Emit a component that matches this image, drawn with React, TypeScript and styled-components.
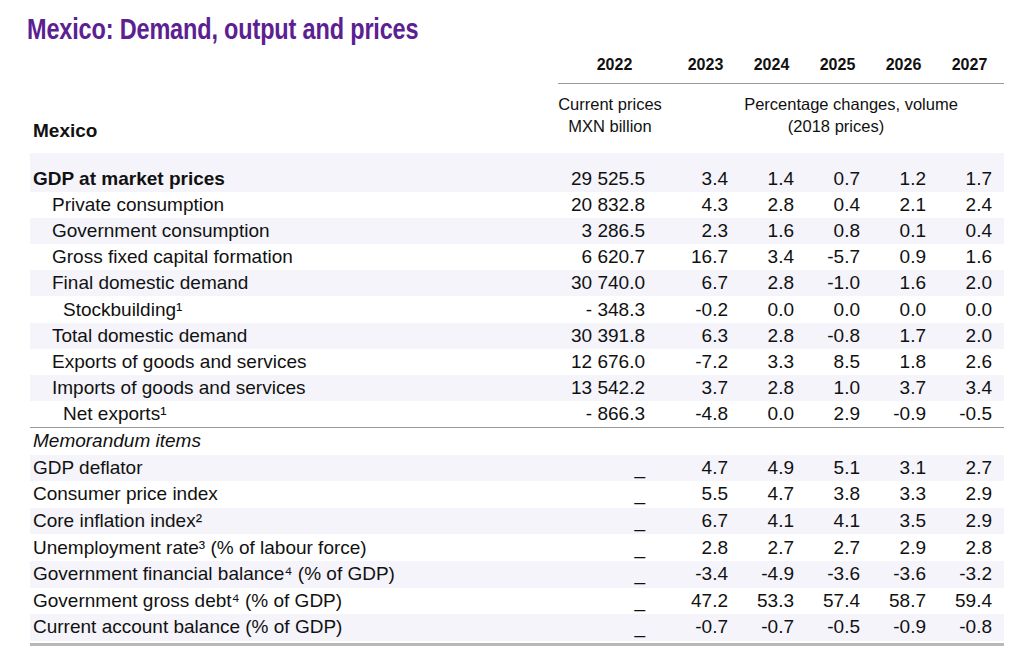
import React from 'react';
import styled, { createGlobalStyle } from 'styled-components';

const GlobalStyle = createGlobalStyle`
  html, body {
    margin: 0;
    padding: 0;
    background: #ffffff;
  }
  body {
    font-family: "Liberation Sans", Arial, sans-serif;
    color: #111111;
  }
`;

const COLS = '528px 116px repeat(5, 66px)';

const Page = styled.div`
  width: 1024px;
  height: 657px;
  padding: 10px 0 0 30px;
  box-sizing: border-box;
`;

// narrow bold heading (Arial Narrow look): squeeze Liberation Sans Bold
const Title = styled.h1`
  margin: 0 0 0 -3px;
  padding-top: 2px;
  height: 34px;
  box-sizing: border-box;
  font-family: "Liberation Sans", Arial, sans-serif;
  font-weight: 700;
  font-size: 29px;
  line-height: 34px;
  letter-spacing: -0.2px;
  color: #5b2192;
  white-space: nowrap;
  transform: scaleX(0.81);
  transform-origin: left center;
`;

const Table = styled.div`
  width: 974px;
`;

const YearRow = styled.div`
  display: grid;
  grid-template-columns: ${COLS};
`;

const YearCell = styled.div`
  padding: 11px 3px 8px 0;
  font-size: 16px;
  font-weight: 700;
  line-height: 20px;
  text-align: center;
  border-bottom: 1px solid #9a9a9a;

  &:first-of-type {
    padding-right: 12px;
  }
`;

const SubHeadRow = styled.div`
  display: grid;
  grid-template-columns: ${COLS};
  padding: 9px 0 16px;
  font-size: 16.5px;
  line-height: 22px;
`;

const CountryLabel = styled.div`
  align-self: end;
  margin-bottom: -5px;
  padding-left: 3px;
  font-size: 19px;
  font-weight: 700;
  line-height: 22px;
`;

const UnitNote = styled.div<{ $span?: number }>`
  grid-column: span ${(p) => p.$span ?? 1};
  text-align: center;
  padding-right: ${(p) => (p.$span ? 0 : 12)}px;
`;

const NoteLine = styled.span<{ $shift: number }>`
  display: block;
  padding-left: ${(p) => (p.$shift > 0 ? p.$shift : 0)}px;
  padding-right: ${(p) => (p.$shift < 0 ? -p.$shift : 0)}px;
`;

const Row = styled.div<{ $shaded?: boolean; $lead?: boolean; $divider?: boolean; $memo?: boolean }>`
  display: grid;
  grid-template-columns: ${COLS};
  align-items: center;
  box-sizing: content-box;
  height: ${(p) => (p.$memo ? 26.6 : 26.1)}px;
  padding-top: ${(p) => (p.$lead ? 13 : 0)}px;
  background: ${(p) => (p.$shaded ? '#f4f4fa' : 'transparent')};
  border-bottom: ${(p) => (p.$divider ? '1px solid #9a9a9a' : 'none')};
  font-size: 19px;
  line-height: 22px;
`;

const Label = styled.div<{ $indent?: number; $bold?: boolean; $italic?: boolean }>`
  padding-left: ${(p) => [3, 22, 33][p.$indent ?? 0]}px;
  font-weight: ${(p) => (p.$bold ? 700 : 400)};
  font-style: ${(p) => (p.$italic ? 'italic' : 'normal')};
  white-space: nowrap;
`;

const Value = styled.div<{ $base?: boolean }>`
  text-align: right;
  padding-right: ${(p) => (p.$base ? 29 : 12)}px;
  white-space: nowrap;
`;

const BottomRule = styled.div`
  margin-top: 2px;
  height: 3px;
  background: #b8b8b8;
`;

type Line = {
  label: string;
  indent?: number;
  bold?: boolean;
  base: string;
  changes: string[];
};

const demand: Line[] = [
  { label: 'GDP at market prices', bold: true, base: '29 525.5', changes: ['3.4', '1.4', '0.7', '1.2', '1.7'] },
  { label: 'Private consumption', indent: 1, base: '20 832.8', changes: ['4.3', '2.8', '0.4', '2.1', '2.4'] },
  { label: 'Government consumption', indent: 1, base: '3 286.5', changes: ['2.3', '1.6', '0.8', '0.1', '0.4'] },
  { label: 'Gross fixed capital formation', indent: 1, base: '6 620.7', changes: ['16.7', '3.4', '-5.7', '0.9', '1.6'] },
  { label: 'Final domestic demand', indent: 1, base: '30 740.0', changes: ['6.7', '2.8', '-1.0', '1.6', '2.0'] },
  { label: 'Stockbuilding¹', indent: 2, base: '- 348.3', changes: ['-0.2', '0.0', '0.0', '0.0', '0.0'] },
  { label: 'Total domestic demand', indent: 1, base: '30 391.8', changes: ['6.3', '2.8', '-0.8', '1.7', '2.0'] },
  { label: 'Exports of goods and services', indent: 1, base: '12 676.0', changes: ['-7.2', '3.3', '8.5', '1.8', '2.6'] },
  { label: 'Imports of goods and services', indent: 1, base: '13 542.2', changes: ['3.7', '2.8', '1.0', '3.7', '3.4'] },
  { label: 'Net exports¹', indent: 2, base: '- 866.3', changes: ['-4.8', '0.0', '2.9', '-0.9', '-0.5'] },
];

const memo: Line[] = [
  { label: 'GDP deflator', base: '_', changes: ['4.7', '4.9', '5.1', '3.1', '2.7'] },
  { label: 'Consumer price index', base: '_', changes: ['5.5', '4.7', '3.8', '3.3', '2.9'] },
  { label: 'Core inflation index²', base: '_', changes: ['6.7', '4.1', '4.1', '3.5', '2.9'] },
  { label: 'Unemployment rate³ (% of labour force)', base: '_', changes: ['2.8', '2.7', '2.7', '2.9', '2.8'] },
  { label: 'Government financial balance⁴ (% of GDP)', base: '_', changes: ['-3.4', '-4.9', '-3.6', '-3.6', '-3.2'] },
  { label: 'Government gross debt⁴ (% of GDP)', base: '_', changes: ['47.2', '53.3', '57.4', '58.7', '59.4'] },
  { label: 'Current account balance (% of GDP)', base: '_', changes: ['-0.7', '-0.7', '-0.5', '-0.9', '-0.8'] },
];

const years = ['2022', '2023', '2024', '2025', '2026', '2027'];

const Cells: React.FC<{ line: Line }> = ({ line }) => (
  <>
    <Label $indent={line.indent} $bold={line.bold}>
      {line.label}
    </Label>
    <Value $base>{line.base}</Value>
    {line.changes.map((v, i) => (
      <Value key={i}>{v}</Value>
    ))}
  </>
);

export default function App() {
  return (
    <>
      <GlobalStyle />
      <Page>
        <Title>Mexico: Demand, output and prices</Title>
        <Table>
          <YearRow>
            <div />
            {years.map((y) => (
              <YearCell key={y}>{y}</YearCell>
            ))}
          </YearRow>

          <SubHeadRow>
            <CountryLabel>Mexico</CountryLabel>
            <UnitNote>
              Current prices
              <br />
              MXN billion
            </UnitNote>
            <UnitNote $span={5}>
              <NoteLine $shift={24}>Percentage changes, volume</NoteLine>
              <NoteLine $shift={-6}>(2018 prices)</NoteLine>
            </UnitNote>
          </SubHeadRow>

          {demand.map((line, i) => (
            <Row
              key={line.label}
              $shaded={i % 2 === 0}
              $lead={i === 0}
              $divider={i === demand.length - 1}
            >
              <Cells line={line} />
            </Row>
          ))}

          {/* Memorandum items */}
          <Row $memo>
            <Label $italic>Memorandum items</Label>
          </Row>
          {memo.map((line, i) => (
            <Row key={line.label} $memo $shaded={i % 2 === 0}>
              <Cells line={line} />
            </Row>
          ))}
          <BottomRule />
        </Table>
      </Page>
    </>
  );
}
